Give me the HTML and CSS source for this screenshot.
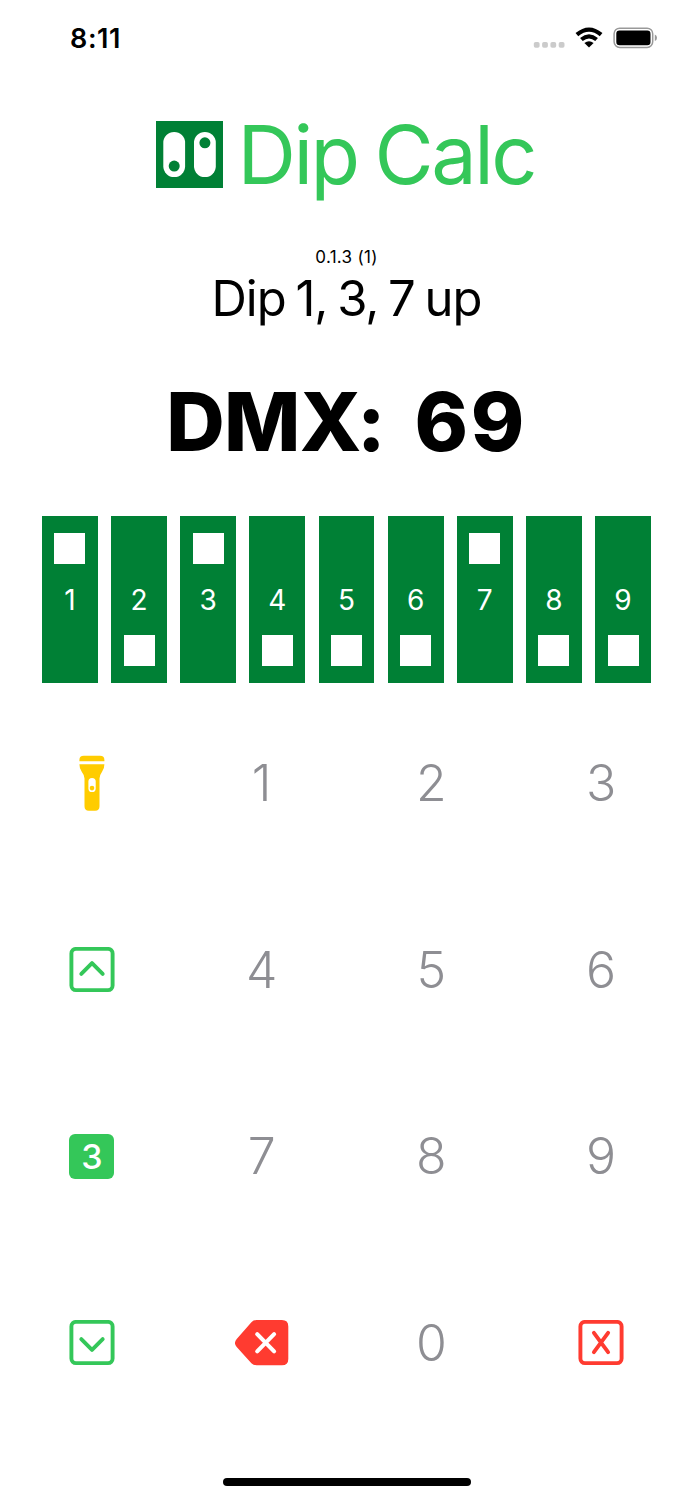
FILE: index.html
```html
<!DOCTYPE html>
<html lang="en">
<head>
<meta charset="utf-8">
<title>Dip Calc</title>
<link rel="stylesheet" href="styles.css">
</head>
<body>
<div class="screen">
  <div class="status">
    <span class="time">8:11</span>
    <svg class="indicators" viewBox="0 0 126 26" width="126" height="26">
      <g fill="#cbcbcb"><rect x="1.8" y="16" width="5.8" height="5.8" rx="1.8"/><rect x="10.1" y="16" width="5.8" height="5.8" rx="1.8"/><rect x="18.4" y="16" width="5.8" height="5.8" rx="1.8"/><rect x="26.7" y="16" width="5.8" height="5.8" rx="1.8"/></g>
      <g fill="none" stroke="#000" stroke-width="4.2"><path d="M44.9 8.7Q57 -1.4 69.1 8.7"/><path d="M49.4 13.5Q57 7.2 64.6 13.5"/></g>
      <path d="M52.4 16.9Q57 13.4 61.6 16.9L57 21.6Z"/>
      <rect x="82.1" y="2.2" width="38.6" height="19.2" rx="5.6" fill="none" stroke="#999" stroke-width="1.5"/>
      <rect x="84.3" y="4.6" width="34.2" height="14.6" rx="3.2"/>
      <path d="M122.8 8.4Q125 9.2 125 11.7T122.8 15Z" fill="#999"/>
    </svg>
  </div>
  <header class="brand">
    <svg class="logo" viewBox="0 0 67 67" width="67" height="67">
      <rect width="67" height="67" fill="#008035"/>
      <rect x="7.3" y="10.9" width="21.8" height="45.2" rx="10.9" fill="#fff"/>
      <rect x="38" y="10.9" width="21.8" height="45.2" rx="10.9" fill="#fff"/>
      <circle cx="18.2" cy="45.1" r="5.5" fill="#008035"/><circle cx="48.9" cy="21.8" r="5.5" fill="#008035"/>
    </svg>
    <h1 class="title">Dip Calc</h1>
  </header>
  <p class="version">0.1.3 (1)</p>
  <p class="summary">Dip 1, 3, 7 up</p>
  <p class="dmx"><span class="label">DM<span class="tight">X</span>:</span> <span class="value">69</span></p>
  <div class="switches">
    <div class="switch up"><span class="num">1</span></div>
    <div class="switch"><span class="num">2</span></div>
    <div class="switch up"><span class="num">3</span></div>
    <div class="switch"><span class="num">4</span></div>
    <div class="switch"><span class="num">5</span></div>
    <div class="switch"><span class="num">6</span></div>
    <div class="switch up"><span class="num">7</span></div>
    <div class="switch"><span class="num">8</span></div>
    <div class="switch"><span class="num">9</span></div>
  </div>
  <div class="keypad">
    <div class="key"><svg viewBox="0 0 26 56" width="26" height="56" fill="#ffcc00"><path d="M.4 6.2V5Q.4.8 4.8.8H21Q25.4.8 25.4 5V6.2ZM.4 9.3H25.4Q25.4 13.5 23.2 16.5Q20.5 20.3 20.5 23.5V51.3Q20.5 55.7 16.2 55.7H9.8Q5.5 55.7 5.5 51.3V23.5Q5.5 20.3 2.6 16.5Q.4 13.5 .4 9.3Z"/><rect x="9.4" y="22.9" width="7.3" height="14.2" rx="3.65" fill="#fff"/><circle cx="13" cy="33.1" r="2.3"/></svg></div>
    <div class="key">1</div><div class="key">2</div><div class="key">3</div>
    <div class="key"><svg class="box green" viewBox="0 .5 46 46" width="46" height="46"><rect x="2.4" y="2.4" width="41.2" height="41.2" rx="4.6"/><path d="M12.3 27.4 23 16.6 33.7 27.4"/></svg></div>
    <div class="key">4</div><div class="key">5</div><div class="key">6</div>
    <div class="key"><span class="bank">3</span></div>
    <div class="key">7</div><div class="key">8</div><div class="key">9</div>
    <div class="key"><svg class="box green" viewBox="0 .5 46 46" width="46" height="46"><rect x="2.4" y="2.4" width="41.2" height="41.2" rx="4.6"/><path d="M12.3 19.6 23 30.4 33.7 19.6"/></svg></div>
    <div class="key"><svg viewBox="1 .3 54 46" width="54" height="46"><path d="M21.9.4H47.3Q53.7.4 53.7 6.7V39.3Q53.7 45.6 47.3 45.6H21.9Q19 45.6 16.8 43.5L2.1 27.3Q-1.4 23.5 2.1 19.4L16.8 2.5Q19 .4 21.9.4Z" transform="translate(.6)" fill="#ff3b30"/><path d="M23.2 14.4 40.1 31.7M40.1 14.4 23.2 31.7" stroke="#fff" stroke-width="4.1" stroke-linecap="round"/></svg></div>
    <div class="key">0</div>
    <div class="key"><svg class="box red" viewBox="0 .5 46 46" width="46" height="46"><rect x="2.4" y="2.4" width="41.2" height="41.2" rx="4.6"/><path d="M15.9 13.4 30.1 32.6M30.1 13.4 15.9 32.6"/></svg></div>
  </div>
  <div class="home"></div>
</div>
</body>
</html>
```
FILE: styles.css
```css
* { box-sizing: border-box; }
body { margin: 0; background: #fff; color: #000; font-family: Inter, "Liberation Sans", sans-serif; }
.screen { width: 693px; height: 1500px; display: flex; flex-direction: column; overflow: hidden; }
.status { height: 121px; padding: 26px 35px 0 70px; display: flex; justify-content: space-between; align-items: flex-start; }
.time { font-size: 27px; font-weight: 600; line-height: 26px; letter-spacing: .6px; }
.brand { height: 120px; padding-left: 156px; display: flex; align-items: flex-start; }
.title { margin: -16px 0 0 14.5px; font-size: 81px; font-weight: 400; line-height: 100px; color: #34c759; white-space: nowrap; letter-spacing: -2.5px; word-spacing: -3.4px; }
.version, .summary, .dmx { margin: 0; text-align: center; white-space: nowrap; }
.version { height: 30px; padding-top: 6px; font-size: 17px; line-height: 20px; letter-spacing: .3px; }
.summary { height: 101px; font-size: 49px; line-height: 56px; letter-spacing: -1px; word-spacing: -3.1px; }
.dmx { height: 144px; font-size: 81px; font-weight: 800; line-height: 100px; word-spacing: 12px; font-feature-settings: "calt" 0; }
.label { letter-spacing: -.7px; }
.tight { letter-spacing: -4.5px; }
.value { letter-spacing: 2.5px; }
.switches { display: grid; grid-template-columns: repeat(9, 55.8px); gap: 13.35px; height: 167px; justify-content: center; }
.switch { background: #008035; display: flex; flex-direction: column; align-items: center; padding-top: 70px; }
.switch::after { content: ""; width: 31px; height: 31px; margin-top: 21px; background: #fff; flex: none; }
.switch.up { padding-top: 0; }
.switch.up::after { order: -1; margin: 17px 0 22px; }
.num { height: 28px; line-height: 28px; font-size: 28px; color: #fff; }
.keypad { display: grid; grid-template-columns: repeat(4, 169.7px); grid-template-rows: repeat(4, 186.6px); justify-content: center; margin-top: 7px; }
.key { display: flex; align-items: center; justify-content: center; font-size: 50px; font-weight: 300; line-height: 60px; color: #8e8e93; }
.box { fill: none; stroke-width: 3.9; stroke-linecap: round; stroke-linejoin: round; }
.green { stroke: #34c759; }
.red { stroke: #ff3b30; }
.bank { width: 45px; height: 45px; border-radius: 6px; background: #34c759; color: #fff; font-size: 34px; font-weight: 500; line-height: 45px; text-align: center; }
.home { width: 248px; height: 8px; margin: 42px auto 0; border-radius: 4px; background: #000; flex: none; }
```
